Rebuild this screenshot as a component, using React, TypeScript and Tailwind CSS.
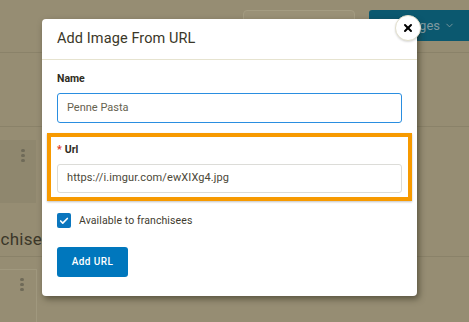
import { X, ChevronDown, Check } from 'lucide-react';

function Dots() {
  return (
    <div className="flex flex-col gap-[2px]">
      <span className="w-[4px] h-[3px] rounded-full bg-[#6f6a58]" />
      <span className="w-[4px] h-[3px] rounded-full bg-[#6f6a58]" />
      <span className="w-[4px] h-[3px] rounded-full bg-[#6f6a58]" />
    </div>
  );
}

function Background() {
  return (
    <div className="w-full h-full bg-[#968d73] flex flex-col">
      <div className="h-[53px] border-b border-[#8a8269] flex items-start pt-[10px] pl-[243px] gap-[14px] shrink-0">
        <div className="w-[112px] h-[31px] rounded-[4px] border border-[#a49c82] bg-[#9a9177]" />
        <div className="flex-1 h-[31px] rounded-l-[3px] bg-[#0b586f] flex items-center justify-end pr-[14px] gap-[4px] text-[#7f9aa0] text-[13px]">
          <span>Images</span>
          <ChevronDown className="w-[11px] h-[11px]" />
        </div>
      </div>
      <div className="h-[74px] border-b border-[#8a8269] shrink-0" />
      <div className="pt-[13px] shrink-0">
        <div className="w-[36px] h-[63px] bg-[#8f876e] flex justify-end pr-[11px] pt-[9px]">
          <Dots />
        </div>
      </div>
      <div className="h-[54px] border-b border-[#8a8269] pt-[26px] shrink-0 overflow-hidden">
        <div className="ml-[-34px] text-[17px] leading-[20px] text-[#3b3729] tracking-[0.3px] whitespace-nowrap">Franchisees</div>
      </div>
      <div className="pt-[12px]">
        <div className="w-[37px] h-[60px] border-t border-r border-[#a0987e] flex justify-end pr-[12px] pt-[8px]">
          <Dots />
        </div>
      </div>
    </div>
  );
}

export default function App() {
  return (
    <div className="relative w-[469px] h-[322px] overflow-hidden" style={{ fontFamily: 'Roboto, "Liberation Sans", sans-serif' }}>
      <Background />

      <div className="absolute left-[42px] top-[19px] w-[375px] h-[277px] bg-white rounded-[4px] shadow-[2px_3px_6px_rgba(40,36,20,0.55)]">
        <div className="h-[41px] border-b border-[#e6e3cf] flex items-center pl-[15px]">
          <h2 className="text-[14.5px] text-[#3a3728] tracking-[0.1px]">Add Image From URL</h2>
        </div>

        <div className="px-[15px] pt-[12px]">
          <label className="block text-[10.5px] leading-[14px] font-bold text-[#2f2c22] mb-[7px]">Name</label>
          <div className="h-[30px] border border-[#2a8ee0] rounded-[3px] flex items-center px-[9px] text-[11px] text-[#66624f]">
            Penne Pasta
          </div>
        </div>

        <div className="mx-[5px] mt-[10px] border-[4px] border-[#f79a00] shadow-[0_1px_2px_rgba(0,0,0,0.25)] px-[6px] pt-[6px] pb-[4px]">
          <label className="flex items-center gap-[3px] text-[10.5px] leading-[14px] font-bold text-[#2f2c22] mb-[7px]">
            <span className="text-[#e0391f]">*</span>
            <span>Url</span>
          </label>
          <div className="h-[29px] border border-[#dcdcd8] rounded-[3px] flex items-center px-[9px] text-[11px] text-[#4b4838] tracking-[0.1px]">
            https://i.imgur.com/ewXIXg4.jpg
          </div>
        </div>

        <div className="px-[15px] pt-[12px] flex items-center gap-[8px]">
          <div className="w-[14px] h-[15px] rounded-[2px] bg-[#0a76be] flex items-center justify-center">
            <Check className="w-[10px] h-[10px] text-white" strokeWidth={4} />
          </div>
          <span className="text-[10.5px] text-[#3f3c2f] tracking-[0.1px]">Available to franchisees</span>
        </div>

        <div className="px-[15px] pt-[18px]">
          <button className="w-[71px] h-[30px] rounded-[3px] bg-[#0077bd] text-white text-[10px] font-medium tracking-[0.4px]">
            Add URL
          </button>
        </div>
      </div>

      <button className="absolute left-[395px] top-[15px] w-[26px] h-[26px] rounded-full bg-white border border-[#e2dfcc] flex items-center justify-center shadow-[0_1px_2px_rgba(0,0,0,0.15)]">
        <X className="w-[12px] h-[12px] text-black" strokeWidth={4} />
      </button>
    </div>
  );
}
